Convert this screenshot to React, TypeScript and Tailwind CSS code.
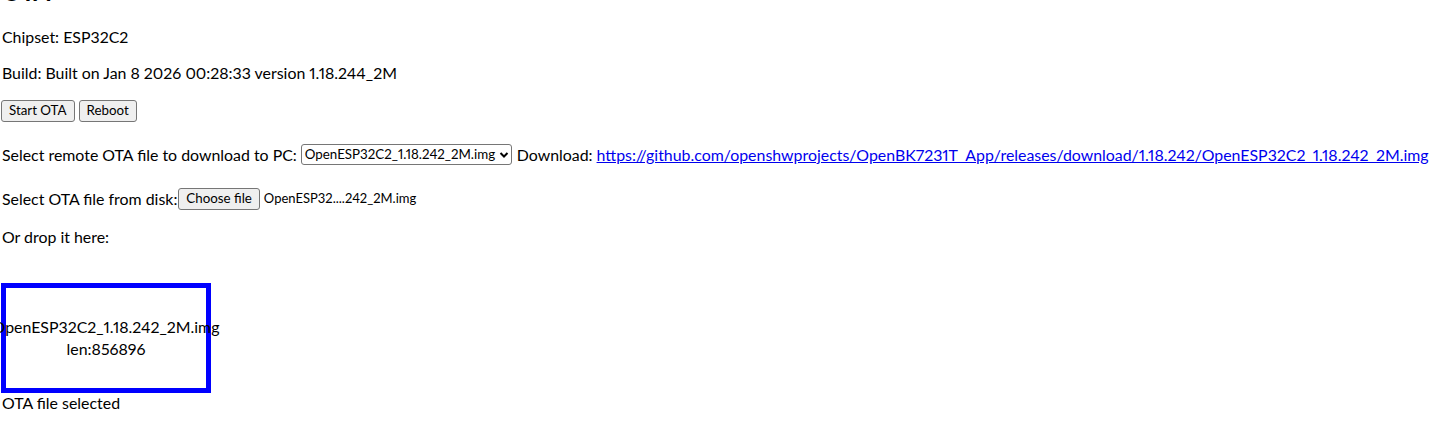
const font = { fontFamily: "Lato, 'Noto Sans', sans-serif" };

const Chevron = () => (
  <svg width="10" height="10" viewBox="0 0 10 10" className="shrink-0 ml-[3px]">
    <polyline points="1.5,3 5,6.5 8.5,3" fill="none" stroke="#000" strokeWidth="2" />
  </svg>
);

const App = () => {
  return (
    <div
      className="w-[1446px] h-[442px] overflow-hidden bg-white text-black proportional-nums"
      style={font}
    >
      <div className="pl-[2px]">
        <h2 className="text-2xl font-bold leading-[28px] mt-[-22px] mb-[21px]">OTA</h2>

        <p className="text-[15.9px] leading-5 mb-4">Chipset: ESP32C2</p>
        <p className="text-[15.9px] leading-5 mb-4">
          Build: Built on Jan 8 2026 00:28:33 version 1.18.244_2M
        </p>

        <div className="flex items-center h-6 mb-4 gap-[4px] -ml-px">
          <button className="h-[22px] px-[7px] text-[13.33px] bg-[#efefef] border border-[#767676] rounded-[3px]">
            Start OTA
          </button>
          <button className="h-[22px] px-[7px] text-[13.33px] bg-[#efefef] border border-[#767676] rounded-[3px]">
            Reboot
          </button>
        </div>

        <div className="flex items-center h-[31px] mb-4 whitespace-nowrap text-[15.9px]">
          <span>Select remote OTA file to download to PC:</span>
          <div className="ml-[4px] mr-[5px] h-[21px] w-[211px] shrink-0 flex items-center justify-between pl-[3px] pr-[2px] border border-[#767676] rounded-[3px] text-[13.33px]">
            <span>OpenESP32C2_1.18.242_2M.img</span>
            <Chevron />
          </div>
          <span>Download:</span>
          <a href="#" className="ml-[4px] text-[#0000ee] underline">
            https://github.com/openshwprojects/OpenBK7231T_App/releases/download/1.18.242/OpenESP32C2_1.18.242_2M.img
          </a>
        </div>

        <div className="flex items-center h-[25px] mb-4 whitespace-nowrap text-[15.9px]">
          <span>Select OTA file from disk:</span>
          <button className="ml-px h-[22px] px-[7px] text-[13.33px] bg-[#efefef] border border-[#767676] rounded-[3px]">
            Choose file
          </button>
          <span className="ml-[4px] text-[13px]">OpenESP32....242_2M.img</span>
        </div>

        <p className="text-[15.9px] leading-5 mb-4">Or drop it here:</p>
        <div className="h-5"></div>
      </div>

      <div className="ml-px w-[210px] h-[110px] border-[5px] border-[#0000ff] flex flex-col items-center justify-center text-[15.9px] leading-[22px] whitespace-nowrap">
        <span>OpenESP32C2_1.18.242_2M.img</span>
        <span>len:856896</span>
      </div>
      <p className="pl-[2px] text-[15.9px] leading-5">OTA file selected</p>
    </div>
  );
};

export default App;
